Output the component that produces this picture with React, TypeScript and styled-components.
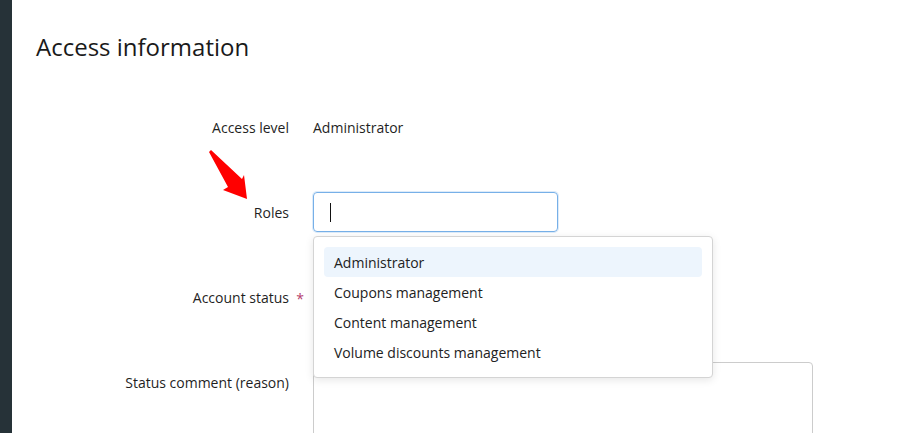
import styled, { createGlobalStyle } from 'styled-components'

const GlobalStyle = createGlobalStyle`
  html, body {
    margin: 0;
    padding: 0;
    background: #fff;
    font-family: "Open Sans", "Noto Sans", sans-serif;
    color: #1f1f1f;
  }
`

const Page = styled.div`
  display: flex;
  width: 917px;
  height: 433px;
  overflow: hidden;
`

const Sidebar = styled.div`
  width: 12px;
  flex-shrink: 0;
  background: #263238;
`

const Content = styled.div`
  position: relative;
  flex: 1;
  padding: 30px 0 0 24px;
`

const Heading = styled.h2`
  margin: 0 0 43px;
  font-size: 24px;
  font-weight: 400;
  line-height: 34px;
  color: #1a1a1a;
`

const Form = styled.div`
  display: grid;
  grid-template-columns: 253px 500px;
  column-gap: 24px;
  row-gap: 45px;
`

const Label = styled.div`
  position: relative;
  height: 40px;
  display: flex;
  align-items: center;
  justify-content: flex-end;
  font-size: 14px;
`

const Required = styled.span`
  position: absolute;
  right: -15px;
  top: 12px;
  color: #b5406e;
  font-size: 14px;
`

const Value = styled.div`
  height: 40px;
  display: flex;
  align-items: center;
  font-size: 14px;
`

const Field = styled.div`
  position: relative;
  height: 40px;
`

const Input = styled.div<{ $width: number; $focused?: boolean }>`
  box-sizing: border-box;
  width: ${p => p.$width}px;
  height: 40px;
  border: 1px solid ${p => (p.$focused ? '#77b0e8' : '#cccccc')};
  border-radius: 4px;
  box-shadow: ${p => (p.$focused ? '0 0 0 1px rgba(119,176,232,0.25)' : 'none')};
  display: flex;
  align-items: center;
  padding-left: 16px;
`

const Caret = styled.span`
  width: 1px;
  height: 19px;
  background: #111;
`

const TextArea = styled.div`
  box-sizing: border-box;
  width: 500px;
  height: 120px;
  border: 1px solid #cccccc;
  border-radius: 4px;
`

const Dropdown = styled.div`
  position: absolute;
  top: 44px;
  left: 0;
  z-index: 2;
  box-sizing: border-box;
  width: 400px;
  padding: 10px;
  background: #fff;
  border: 1px solid #d4d4d4;
  border-radius: 4px;
  box-shadow: 0 2px 8px rgba(0, 0, 0, 0.1);
`

const Option = styled.div<{ $active?: boolean }>`
  height: 30px;
  display: flex;
  align-items: center;
  padding-left: 10px;
  border-radius: 4px;
  font-size: 14px;
  color: #222;
  background: ${p => (p.$active ? '#edf5fd' : 'transparent')};
`

const Arrow = styled.svg`
  position: absolute;
  left: 196px;
  top: 148px;
  z-index: 3;
`

const roles = ['Administrator', 'Coupons management', 'Content management', 'Volume discounts management']

export default function App() {
  return (
    <Page>
      <GlobalStyle />
      <Sidebar />
      <Content>
        <Heading>Access information</Heading>
        <Form>
          <Label>Access level</Label>
          <Value>Administrator</Value>

          <Label>Roles</Label>
          <Field>
            <Input $width={245} $focused>
              <Caret />
            </Input>
            <Dropdown>
              {roles.map((r, i) => (
                <Option key={r} $active={i === 0}>{r}</Option>
              ))}
            </Dropdown>
          </Field>

          <Label>
            Account status
            <Required>*</Required>
          </Label>
          <Field>
            <Input $width={245} />
          </Field>

          <Label>Status comment (reason)</Label>
          <TextArea />
        </Form>

        <Arrow width="56" height="56" viewBox="0 0 56 56">
          <path d="M1 4 L3 2 L34 31 L36 27 L39 51 L15 42 L20 39 Z" fill="#ff0000" />
        </Arrow>
      </Content>
    </Page>
  )
}
